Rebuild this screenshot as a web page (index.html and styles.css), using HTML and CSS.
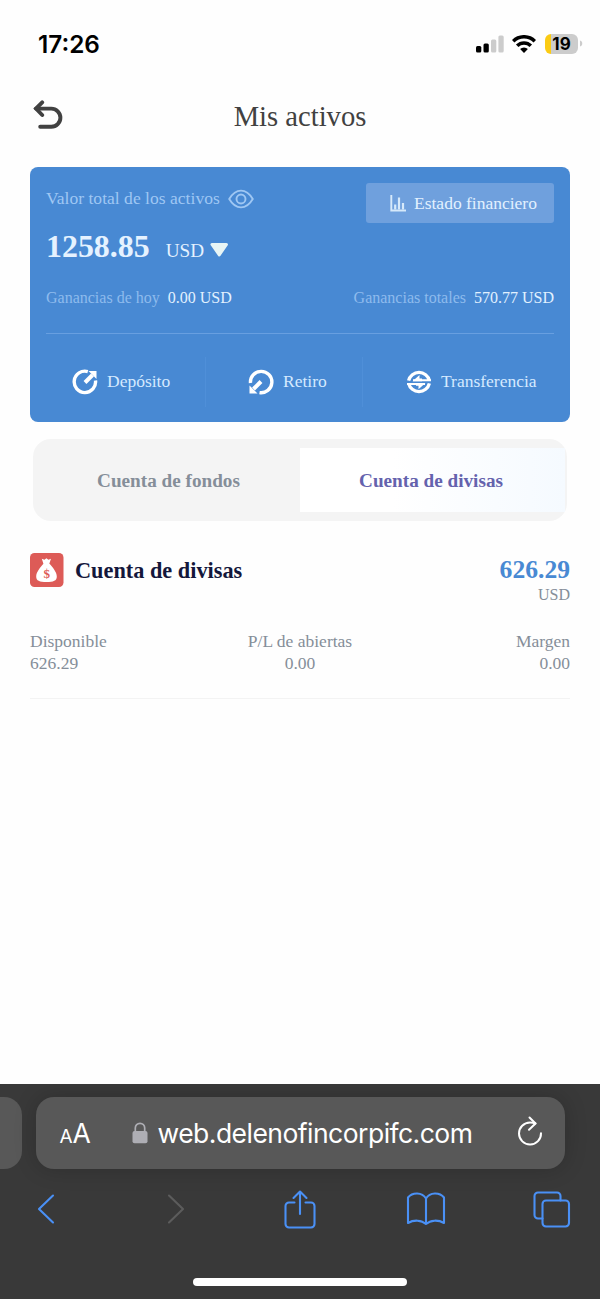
FILE: index.html
```html
<!DOCTYPE html>
<html lang="es">
<head>
<meta charset="utf-8">
<title>Mis activos</title>
<link rel="stylesheet" href="styles.css">
</head>
<body>
<div class="status">
  <span class="clock">17:26</span>
  <div class="status-icons">
    <svg class="signal" width="28" height="18" viewBox="0 0 28 18"><rect x="0" y="11" width="5.3" height="6.5" rx="1.5"/><rect x="7.5" y="8.5" width="5.3" height="9" rx="1.5"/><g fill="#ccc"><rect x="15" y="4.5" width="5.3" height="13" rx="1.5"/><rect x="22.4" y="0.5" width="5.3" height="17" rx="1.5"/></g></svg>
    <svg class="wifi" width="24" height="18" viewBox="0 0 24 18"><g fill="none" stroke="#000" stroke-width="3.500"><path d="M1.200 6.200a15.300 15.300 0 0 1 21.600 0"/><path d="M5.200 10.700a9.600 9.600 0 0 1 13.600 0"/></g><path d="M12 18l-3.900-3.900a5.500 5.500 0 0 1 7.800 0z"/></svg>
    <div class="battery"><span>19</span></div>
    <svg class="cap" width="3" height="7" viewBox="0 0 3 7"><path d="M0 0.5C3 1 3 6 0 6.5z" fill="#ccc"/></svg>
  </div>
</div>
<header class="header">
  <svg class="back" width="32" height="32" viewBox="0 0 32 32" fill="none" stroke="#414141" stroke-width="3.900"><path d="M3 8.600H18.300a9.100 9.100 0 0 1 0 18.200H7.200" stroke-linecap="round"/><path d="M9.200 2.300L3 8.600l6.200 6.400" stroke-linecap="round"/></svg>
  <h1>Mis activos</h1>
</header>
<main>
  <section class="card">
    <div class="card-top">
      <div class="total">
        <div class="label">Valor total de los activos
          <svg width="26" height="20" viewBox="0 0 26 20" fill="none" stroke="#9fc7f3" stroke-width="1.900"><path d="M1.200 10C4.500 4.500 8.500 1.600 13 1.600S21.500 4.500 24.800 10C21.500 15.500 17.500 18.400 13 18.400S4.500 15.500 1.200 10z" stroke-linejoin="round"/><circle cx="13" cy="10" r="4.500"/></svg>
        </div>
        <div class="amount"><b>1258.85</b><span>USD</span><svg width="20" height="17" viewBox="0 0 20 17"><path d="M3 3.500H17.500L10.250 14z" fill="#e8f5f5" stroke="#e8f5f5" stroke-width="3" stroke-linejoin="round"/></svg></div>
      </div>
      <div class="report">
        <svg width="17" height="17" viewBox="0 0 17 17" fill="none" stroke="#d6e9fa"><path d="M1.300 0V15.500H16" stroke-width="1.900"/><path d="M5.200 14.500V9.500M9 14.500V2.500M13 14.500V8" stroke-width="2.200"/></svg>
        <span>Estado financiero</span>
      </div>
    </div>
    <div class="gains">
      <div>Ganancias de hoy<b>0.00 USD</b></div>
      <div>Ganancias totales<b>570.77 USD</b></div>
    </div>
    <div class="actions">
      <div class="action deposit"><svg width="26" height="26" viewBox="0 0 26 26" fill="none" stroke="#fff" stroke-width="3.400"><path d="M15.800 2.600A10.700 10.700 0 1 0 23.500 11.500"/><path d="M13 13.500L20.500 6" stroke-width="4"/><path d="M16.500 2H24.500V10z" fill="#fff" stroke="none"/></svg><span>Depósito</span></div>
      <div class="action withdraw"><svg width="26" height="26" viewBox="0 0 26 26" fill="none" stroke="#fff" stroke-width="3.400"><path d="M2.500 14A10.700 10.700 0 1 1 11.500 23.600"/><path d="M13 12.500L5.500 20" stroke-width="4"/><path d="M1.500 16.500V24.500H9.500z" fill="#fff" stroke="none"/></svg><span>Retiro</span></div>
      <div class="action transfer"><svg width="26" height="26" viewBox="0 0 26 26" fill="none" stroke="#fff"><path d="M2.600 11.600A10.700 10.700 0 0 1 23.400 11.600M2.600 14.400A10.700 10.700 0 0 0 23.400 14.400" stroke-width="3.300"/><path d="M7 11.300H25M1 14.900H19" stroke-width="2"/><path d="M6.500 12.300L13.500 6V9.500H16V12.300zM19.500 13.900L12.500 20.200V16.700H10V13.900z" fill="#fff" stroke="none"/></svg><span>Transferencia</span></div>
    </div>
  </section>
  <nav class="tabs"><div class="tab">Cuenta de fondos</div><div class="tab active">Cuenta de divisas</div></nav>
  <section class="account">
    <div class="account-head">
      <svg width="34" height="34" viewBox="0 0 34 34"><rect width="33.500" height="34" rx="4.500" fill="#dd5b57"/><path d="M11.800 5.700l2.600 1 2-1.500 2 1.500 2.600-1-1.800 5.300H13.500z" fill="#fff"/><path d="M13.500 10.800H19.500C22.500 14.300 26.800 19 26.800 23.500C26.800 27.800 23.500 29 16.500 29S6.200 27.800 6.200 23.500C6.200 19 10.500 14.300 13.500 10.800z" fill="#fff"/><text class="coin" x="16.800" y="24.500" text-anchor="middle">$</text></svg>
      <h2>Cuenta de divisas</h2>
      <div class="balance"><b>626.29</b><span>USD</span></div>
    </div>
    <div class="stats">
      <div>Disponible<br>626.29</div><div>P/L de abiertas<br>0.00</div><div>Margen<br>0.00</div>
    </div>
  </section>
</main>
<footer class="browser">
  <div class="address-row">
    <div class="previous"></div>
    <div class="address">
      <span class="reader"><small>A</small>A</span>
      <svg class="lock" width="16" height="22" viewBox="0 0 16 22"><path d="M3.300 10V6a4.700 4.700 0 0 1 9.400 0v4" fill="none" stroke="#aeaeb4" stroke-width="1.700"/><rect x="0.500" y="9" width="15" height="12.300" rx="2" fill="#aeaeb4"/></svg>
      <span class="url">web.delenofincorpifc.com</span>
      <svg class="reload" width="26" height="30" viewBox="0 0 26 30" fill="none" stroke="#fff" stroke-width="2" stroke-linecap="round" stroke-linejoin="round"><path d="M24 17.200A11 11 0 1 1 13 6.500Q16 6.500 18.500 7.500"/><path d="M12.500 1.500l6 6-6.500 6.200"/></svg>
    </div>
  </div>
  <div class="toolbar">
    <svg class="prev" width="18" height="30" viewBox="0 0 18 30"><path d="M16 1.500L2 15l14 13.500"/></svg>
    <svg class="next" width="18" height="30" viewBox="0 0 18 30"><path d="M2 1.500L16 15 2 28.500"/></svg>
    <svg class="share" width="32" height="40" viewBox="0 0 32 40"><path d="M10.500 13.500H5a3.500 3.500 0 0 0-3.500 3.500v18a3.500 3.500 0 0 0 3.500 3.500h22a3.500 3.500 0 0 0 3.500-3.500V17a3.500 3.500 0 0 0-3.500-3.500h-5.500M16 25V2.500M9.500 9L16 2.500 22.500 9"/></svg>
    <svg class="book" width="40" height="34" viewBox="0 0 40 34"><path d="M20 6.500V32C15.500 28 8 27.500 2 31V5.500C6.500 0 16 0 20 6.500C24 0 33.500 0 38 5.500V31C32 27.500 24.500 28 20 32"/></svg>
    <svg class="windows" width="38" height="38" viewBox="0 0 38 38"><path d="M9.500 28.500H5A3.500 3.500 0 0 1 1.500 25V6A3.500 3.500 0 0 1 5 2.500H24A3.500 3.500 0 0 1 27.500 6v4.500"/><rect x="9.500" y="10.500" width="26.500" height="26" rx="3.500"/></svg>
  </div>
  <div class="home"></div>
</footer>
</body>
</html>
```

FILE: styles.css
```css
* { box-sizing: border-box; }
body {
  margin: 0;
  width: 600px;
  height: 1299px;
  overflow: hidden;
  display: flex;
  flex-direction: column;
  background: #fefefe;
  font-family: "Liberation Serif", "Times New Roman", serif;
  font-size: 17.5px;
  color: #858e99;
}
svg { display: block; flex: none; }
h1, h2 { margin: 0; }

.status {
  height: 87px;
  padding: 0 17px 0 38px;
  display: flex;
  align-items: center;
  justify-content: space-between;
  font-family: Inter, sans-serif;
  color: #000;
}
.clock { font-size: 24.300px; font-weight: 600; }
.status-icons { display: flex; align-items: center; }
.wifi { margin-left: 8px; }
.battery {
  width: 33px;
  height: 20px;
  margin-left: 9px;
  border-radius: 6px;
  background: linear-gradient(90deg, #fbcb14 6.500px, #ccc 6.500px);
  font-size: 17px;
  font-weight: 700;
  line-height: 20px;
  text-align: center;
}
.cap { margin-left: 2px; }

.header {
  height: 80px;
  padding: 0 32px 22px 33px;
  display: grid;
  grid-template-columns: 32px 1fr 33px;
  align-items: center;
  text-align: center;
}
.back { margin-top: -1px; }
h1 { padding-top: 2px; font-size: 28.600px; font-weight: 400; color: #414141; }

main { flex: 1; padding: 0 30px; }
.card {
  height: 255px;
  padding: 16px 16px 0;
  border-radius: 8px;
  background: #4889d3;
}
.card-top { display: flex; justify-content: space-between; height: 104px; }
.label {
  height: 31px;
  display: flex;
  align-items: center;
  gap: 8px;
  color: #9fc7f3;
  letter-spacing: .03px;
}
.amount { display: flex; align-items: baseline; height: 44px; line-height: 65px; color: #e5f2ff; }
.amount b { font-size: 31.900px; }
.amount span { margin-left: 16px; font-size: 19.200px; }
.amount svg { margin-left: 5px; position: relative; top: 1px; }
.report {
  width: 188px;
  height: 40px;
  padding-left: 24px;
  border-radius: 3px;
  background: #6fa0dd;
  display: flex;
  align-items: center;
  gap: 7px;
  color: #e2f1ff;
}
.gains {
  height: 47px;
  display: flex;
  justify-content: space-between;
  border-bottom: 1px solid #689fe0;
  font-size: 16px;
  line-height: 22px;
  color: #8ebbed;
}
.gains b { margin-left: 8px; font-weight: 400; color: #e2f1ff; }
.actions {
  display: grid;
  grid-template-columns: 160px 157px 1fr;
  margin-top: 23px;
  color: #d5eaff;
}
.action { height: 50px; display: flex; align-items: center; gap: 9px; }
.action span { padding-bottom: 2px; }
.deposit, .withdraw { border-right: 1px solid #4f8fd8; }
.deposit { padding-left: 26px; }
.withdraw { padding-left: 42px; }
.transfer { padding-left: 43px; }

.tabs {
  height: 82px;
  margin: 17px 3px 0;
  padding: 9px 2px 9px 0;
  display: flex;
  border-radius: 18px;
  background: #f4f4f4;
  font-size: 19.200px;
  font-weight: 700;
}
.tab { width: 267px; display: grid; place-items: center; padding: 2px 0 0 4px; }
.active {
  width: 265px;
  padding: 2px 3px 0 0;
  background: linear-gradient(90deg, #fff 35%, #f5faff);
  color: #6462ad;
}

.account { height: 178px; border-bottom: 1px solid #f3f3f3; }
.account-head { display: flex; padding-top: 32px; height: 109px; }
.coin { font: 700 13px "Liberation Serif", serif; fill: #dd5b57; }
h2 { margin-left: 11px; font-size: 22.300px; line-height: 36px; color: #14173b; }
.balance { margin-left: auto; text-align: right; }
.balance b { display: block; font-size: 25.600px; line-height: 34px; color: #4889d3; }
.balance span { display: block; font-size: 16px; line-height: 16px; }
.stats { display: grid; grid-template-columns: 1fr 1fr 1fr; line-height: 22.300px; text-align: center; }
.stats div:first-child { text-align: left; }
.stats div:last-child { text-align: right; }

.browser { height: 215px; background: #393939; overflow: hidden; }
.address-row { display: flex; gap: 13.500px; padding-top: 13px; }
.previous { width: 22px; height: 72px; border-radius: 0 18px 18px 0; background: #585858; }
.address {
  width: 529px;
  height: 72px;
  padding: 0 22px 0 24px;
  display: flex;
  align-items: center;
  border-radius: 18px;
  background: #585858;
  box-shadow: 0 0 22px #00000030;
  color: #fff;
  font-family: Inter, sans-serif;
}
.reader { font-size: 26.500px; width: 72px; }
.reader small { font-size: 19px; }
.url { margin-left: 10px; font-size: 26.500px; letter-spacing: -.53px; }
.reload { margin: -4px 0 0 auto; }
.toolbar {
  height: 80px;
  padding: 0 0 0 37px;
  display: flex;
  align-items: center;
}
.toolbar svg { fill: none; stroke: #4a90f5; stroke-width: 2.100; stroke-linecap: round; stroke-linejoin: round; }
.toolbar .next { margin-left: 112px; stroke: #5c5c5c; }
.toolbar .share { margin-left: 99px; }
.toolbar .book { margin-left: 90px; }
.toolbar .windows { margin-left: 87px; }
.home { width: 214px; height: 8px; margin: 29px auto 0; border-radius: 4px; background: #fff; }
```
